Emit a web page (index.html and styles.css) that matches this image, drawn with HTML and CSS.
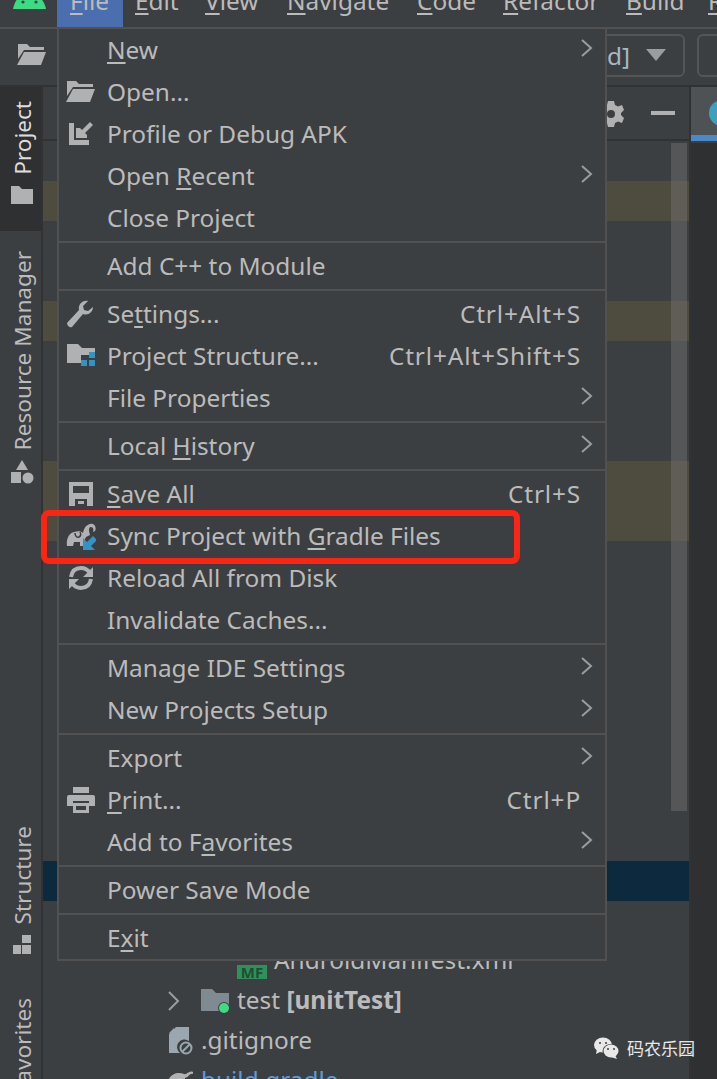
FILE: index.html
```html
<!DOCTYPE html>
<html lang="en">
<head>
<meta charset="utf-8">
<title>Android Studio File menu</title>
<link rel="stylesheet" href="styles.css">
</head>
<body>
<div class="app">
  <header class="menubar">
    <div class="logo"><svg width="34" height="10" viewBox="0 0 34 10"><path class="green" d="M0 9C1 4 3 0 6 -3H26C30 0 32 4 33 9Z"/><circle class="dark" cx="10" cy="2" r="1.6"/><circle class="dark" cx="23" cy="2" r="1.6"/></svg></div>
    <div class="mb-item mb-file"><u>F</u>ile</div>
    <div class="mb-item mb-edit"><u>E</u>dit</div>
    <div class="mb-item mb-view"><u>V</u>iew</div>
    <div class="mb-item mb-nav"><u>N</u>avigate</div>
    <div class="mb-item mb-code"><u>C</u>ode</div>
    <div class="mb-item mb-ref"><u>R</u>efactor</div>
    <div class="mb-item mb-build"><u>B</u>uild</div>
    <div class="mb-item mb-run"><u>R</u>un</div>
  </header>
  <div class="toolbar">
    <svg class="tb-folder" width="30" height="22" viewBox="0 0 30 22"><path class="ic" d="M1 0H10L13 3H27V6H7L1 15ZM7 8H29L24 21H0Z"/></svg>
    <div class="combo"><span class="combo-text">d]</span><svg width="20" height="12" viewBox="0 0 20 12"><path class="ic2" d="M0 0H20L10 12Z"/></svg></div>
    <div class="combo2"></div>
  </div>
  <div class="main">
    <aside class="side">
      <div class="tab tab-on"><span class="vtext">Project</span><svg width="24" height="20" viewBox="0 0 24 20"><path class="ic" d="M1 1H9L12 4H23V19H1Z"/></svg></div>
      <div class="tab tab-res"><span class="vtext">Resource Manager</span><svg width="24" height="24" viewBox="0 0 24 24"><path class="ic" d="M12 0L18 10H6ZM1 12H11V23H1Z"/><circle class="ic" cx="18" cy="18" r="5.5"/></svg></div>
      <div class="tab tab-str"><span class="vtext">Structure</span><svg width="20" height="20" viewBox="0 0 20 20"><path class="ic" d="M1 10H9V19H1ZM10 10H19V19H10ZM10 0H19V8H10Z"/></svg></div>
      <div class="tab tab-fav"><span class="vtext">Favorites</span></div>
    </aside>
    <section class="project">
      <div class="pane-head">
        <svg class="gear" width="26" height="26" viewBox="0 0 26 26"><path class="ic" fill-rule="evenodd" d="M10 0H16L17 4L20 5.500L24 4L26 9L23 12V14L26 17L24 22L20 20.500L17 22L16 26H10L9 22L6 20.500L2 22L0 17L3 14V12L0 9L2 4L6 5.500L9 4ZM13 9A4 4 0 1 0 13 17A4 4 0 1 0 13 9Z"/></svg>
        <div class="minus"></div>
      </div>
      <div class="tree">
        <div class="row"></div>
        <div class="row warn"></div>
        <div class="row"></div>
        <div class="row"></div>
        <div class="row warn"></div>
        <div class="row"></div>
        <div class="row"></div>
        <div class="row"></div>
        <div class="row warn"></div>
        <div class="row warn"></div>
        <div class="row"></div>
        <div class="row"></div>
        <div class="row"></div>
        <div class="row"></div>
        <div class="row"></div>
        <div class="row"></div>
        <div class="row"></div>
        <div class="row"></div>
        <div class="row sel"></div>
        <div class="row"></div>
        <div class="row manifest"><span class="mf">MF</span><span class="rt">AndroidManifest.xml</span></div>
        <div class="row test">
          <svg class="chev" width="12" height="20" viewBox="0 0 12 20"><path d="M1 1L10 10L1 19"/></svg>
          <span class="folder"><svg width="28" height="24" viewBox="0 0 28 24"><path class="blue-gray" d="M0 0H11L15 4H28V22H0Z"/><circle class="dot-ring" cx="23" cy="19" r="6"/><circle class="dot" cx="23" cy="19" r="5"/></svg></span>
          <span class="rt">test <b>[unitTest]</b></span>
        </div>
        <div class="row file">
          <svg width="24" height="28" viewBox="0 0 24 28"><path class="fileic" d="M7 0H20V14A7 7 0 0 0 11 26H0V7ZM5 1V6H0Z"/><circle class="ban" cx="17" cy="21" r="5.500"/><path class="ban" d="M13 25L21 17"/></svg>
          <span class="rt">.gitignore</span>
        </div>
        <div class="row file gradle">
          <svg class="gradle-ic" width="24" height="26" viewBox="0 0 24 26"><path class="ic" d="M0 10C3 4 10 3 15 5C18 6 20 1 24 3V5C21 4 20 8 16 9V24H0Z"/></svg>
          <span class="rt">build.gradle</span>
        </div>
      </div>
      <div class="scrollbar"></div>
    </section>
    <section class="editor">
      <div class="ed-head"><span class="ed-tab"><i class="ed-dot"></i></span></div>
      <div class="ed-body"></div>
    </section>
  </div>

  <nav class="menu">
    <div class="item"><span class="icon"></span><span class="label"><u>N</u>ew</span><svg class="arrow" width="12" height="18" viewBox="0 0 12 18"><path d="M1 1L10 9L1 17"/></svg></div>
    <div class="item"><span class="icon"><svg width="30" height="22" viewBox="0 0 30 22"><path class="ic" d="M1 0H10L13 3H27V6H7L1 15ZM7 8H29L24 21H0Z"/></svg></span><span class="label">Open...</span></div>
    <div class="item"><span class="icon"><svg class="shift" width="26" height="26" viewBox="0 0 26 26"><path class="ic" d="M1 2H6V19H21V24H1Z"/><path class="ic" d="M8 7H12L14 9L22 1L25 4L17 12L19 14V17H8Z"/></svg></span><span class="label">Profile or Debug APK</span></div>
    <div class="item"><span class="icon"></span><span class="label">Open <u>R</u>ecent</span><svg class="arrow" width="12" height="18" viewBox="0 0 12 18"><path d="M1 1L10 9L1 17"/></svg></div>
    <div class="item"><span class="icon"></span><span class="label">Close Project</span></div>
    <div class="sep"></div>
    <div class="item"><span class="icon"></span><span class="label">Add C++ to Module</span></div>
    <div class="sep"></div>
    <div class="item"><span class="icon"><svg width="28" height="28" viewBox="0 0 28 28"><path class="ic" d="M27 7C27 12 22 16 17 14L6 27C4 28 1 26 1 23L13 10C12 5 16 0 22 1L17 6L18 10L22 11Z"/></svg></span><span class="label">Se<u>t</u>tings...</span><span class="short">Ctrl+Alt+S</span></div>
    <div class="item"><span class="icon"><svg width="30" height="26" viewBox="0 0 30 26"><path class="ic" d="M1 1H12L16 5H29V12H15V20H1Z"/><path class="blue" d="M23 9H29V15H23ZM15 17H21V23H15ZM23 17H29V23H23Z"/></svg></span><span class="label">Project Structure...</span><span class="short">Ctrl+Alt+Shift+S</span></div>
    <div class="item"><span class="icon"></span><span class="label">File Properties</span><svg class="arrow" width="12" height="18" viewBox="0 0 12 18"><path d="M1 1L10 9L1 17"/></svg></div>
    <div class="sep"></div>
    <div class="item"><span class="icon"></span><span class="label">Local <u>H</u>istory</span><svg class="arrow" width="12" height="18" viewBox="0 0 12 18"><path d="M1 1L10 9L1 17"/></svg></div>
    <div class="sep"></div>
    <div class="item"><span class="icon"><svg class="shift" width="26" height="26" viewBox="0 0 26 26"><path class="ic" fill-rule="evenodd" d="M1 1H25V25H1ZM5 5V12H21V5ZM7 18V25H19V18ZM10 20H16V23H10Z"/></svg></span><span class="label"><u>S</u>ave All</span><span class="short">Ctrl+S</span></div>
    <div class="item"><span class="icon"><svg width="30" height="28" viewBox="0 0 30 28"><path class="ic" d="M1 24C0 17 3 11 8 10C12 9 15 9 17 11C18 6 20 3 24 2C28 1 31 5 29 9L27 10C28 7 27 5 25 5C23 5 23 7 23 9L24 13L20 15L18 19V24H14V20H8L7 24Z"/><path class="dark-line" d="M9 11C9 14 11 16 13 15C15 14 15 12 14 10"/><path class="blue" d="M17 28V16L21 20L27 14L31 18L25 24L29 28Z"/></svg></span><span class="label">Sync Project with <u>G</u>radle Files</span></div>
    <div class="item"><span class="icon"><svg class="shift" width="26" height="26" viewBox="0 0 26 26"><path class="stroke" d="M3 12C4 6 8 3 13 3C17 3 20 5 22 8"/><path class="stroke" d="M23 14C22 20 18 23 13 23C9 23 6 21 4 18"/><path class="ic" d="M25 2V12H15ZM1 24V14H11Z"/></svg></span><span class="label">Reload All from Disk</span></div>
    <div class="item"><span class="icon"></span><span class="label">Invalidate Caches...</span></div>
    <div class="sep"></div>
    <div class="item"><span class="icon"></span><span class="label">Manage IDE Settings</span><svg class="arrow" width="12" height="18" viewBox="0 0 12 18"><path d="M1 1L10 9L1 17"/></svg></div>
    <div class="item"><span class="icon"></span><span class="label">New Projects Setup</span><svg class="arrow" width="12" height="18" viewBox="0 0 12 18"><path d="M1 1L10 9L1 17"/></svg></div>
    <div class="sep"></div>
    <div class="item"><span class="icon"></span><span class="label">Export</span><svg class="arrow" width="12" height="18" viewBox="0 0 12 18"><path d="M1 1L10 9L1 17"/></svg></div>
    <div class="item"><span class="icon"><svg width="30" height="28" viewBox="0 0 30 28"><path class="ic" fill-rule="evenodd" d="M7 1H23V7H7ZM3 9H27Q29 9 29 11V20H23V15H7V20H1V11Q1 9 3 9ZM7 17H23V27H7ZM10 20V24H20V20Z"/></svg></span><span class="label"><u>P</u>rint...</span><span class="short">Ctrl+P</span></div>
    <div class="item"><span class="icon"></span><span class="label">Add to F<u>a</u>vorites</span><svg class="arrow" width="12" height="18" viewBox="0 0 12 18"><path d="M1 1L10 9L1 17"/></svg></div>
    <div class="sep"></div>
    <div class="item"><span class="icon"></span><span class="label">Power Save Mode</span></div>
    <div class="sep"></div>
    <div class="item"><span class="icon"></span><span class="label">E<u>x</u>it</span></div>
  </nav>
  <div class="mark"></div>
  <div class="watermark">
    <svg width="26" height="22" viewBox="0 0 26 22"><ellipse class="wm" cx="9" cy="8" rx="9" ry="7.500"/><path class="wm" d="M3 12L2 17L8 14Z"/><ellipse class="wm-o" cx="17" cy="14" rx="8.500" ry="7"/><ellipse class="wm" cx="17" cy="14" rx="7.500" ry="6.500"/><path class="wm" d="M21 18L23 22L17 20Z"/><circle class="wm-d" cx="6" cy="6" r="1"/><circle class="wm-d" cx="12" cy="6" r="1"/><circle class="wm-d" cx="14" cy="12" r="1"/><circle class="wm-d" cx="20" cy="12" r="1"/></svg>
    <span>码农乐园</span>
  </div>
</div>
</body>
</html>
```
FILE: styles.css
```css
* { box-sizing: border-box; }
html, body { margin: 0; height: 100%; overflow: hidden; background: #3c3f41; }
body { font-family: "Noto Sans", "Open Sans", sans-serif; color: #bbbbbb; font-size: 24.4px; }
u { text-decoration-thickness: 2px; text-underline-offset: 3px; }
svg { display: block; }
.ic { fill: #afb1b3; }
.ic2 { fill: #9a9c9e; }
.blue { fill: #3592c4; }
.green { fill: #3ddc84; }
.dark { fill: #3c3f41; }
.dark-line { fill: none; stroke: #3c3f41; stroke-width: 1.500; }
.stroke { fill: none; stroke: #afb1b3; stroke-width: 4; }

.app { position: relative; width: 717px; height: 1079px; display: flex; flex-direction: column; overflow: hidden; }

.menubar { flex: none; height: 29px; display: flex; align-items: flex-start; border-bottom: 2px solid #515151; overflow: hidden; }
.logo { flex: none; width: 57px; padding-left: 13px; }
.mb-item { flex: none; line-height: 30px; height: 27px; margin-top: -14px; }
.mb-file { width: 66px; padding-left: 13px; background: #4b6eaf; height: 41px; }
.mb-edit { margin-left: 12px; width: 70px; }
.mb-view { width: 82px; }
.mb-nav { width: 130px; }
.mb-code { width: 86px; }
.mb-ref { width: 123px; }
.mb-build { width: 82px; }

.toolbar { flex: none; height: 58px; display: flex; align-items: center; padding: 0 0 4px 17px; border-bottom: 2px solid #323232; }
.tb-folder { margin-right: auto; }
.combo { width: 300px; height: 43px; border: 2px solid #555; border-radius: 6px; display: flex; align-items: center; justify-content: flex-end; padding-right: 17px; gap: 16px; color: #a9b7c6; }
.combo2 { width: 60px; height: 43px; margin-left: 12px; margin-right: -40px; border: 2px solid #555; border-radius: 6px; }

.main { flex: 1; min-height: 0; display: flex; }
.side { flex: none; width: 43px; border-right: 2px solid #323232; display: flex; flex-direction: column; overflow: hidden; }
.tab { flex: none; display: flex; flex-direction: column; align-items: center; gap: 10px; }
.tab svg { margin-left: 2px; }
.vtext { writing-mode: vertical-rl; transform: rotate(180deg); line-height: 41px; white-space: nowrap; font-size: 22.6px; margin-left: 4px; }
.tab-on { background: #2f3032; color: #ddd; height: 144px; padding-top: 14px; }
.tab-res { margin-top: 20px; }
.tab-str { margin-top: 342px; }
.tab-fav { margin-top: 43px; }

.project { position: relative; flex: none; width: 646px; display: flex; flex-direction: column; }
.pane-head { flex: none; height: 54px; display: flex; align-items: center; justify-content: flex-end; border-bottom: 2px solid #323232; }
.gear { margin-right: 27px; margin-top: 2px; }
.minus { width: 24px; height: 4px; background: #afb1b3; margin-right: 14px; }
.tree { flex: 1; min-height: 0; overflow: hidden; }
.row { height: 40px; display: flex; align-items: center; }
.rt { padding-bottom: 3px; }
.warn { background: #4e4b3f; }
.sel { background: #0d293e; }
.manifest { padding-left: 194px; gap: 7px; }
.mf { width: 30px; height: 14px; background: #30905a; color: #1f4e33; font-size: 15px; font-weight: 700; line-height: 15px; text-align: center; margin-top: 22px; }
.test { padding-left: 125px; }
.chev path { fill: none; stroke: #9a9c9e; stroke-width: 2; }
.folder { margin-left: 21px; margin-right: 8px; }
.blue-gray { fill: #7f8b91; }
.dot-ring { fill: #3c3f41; }
.dot { fill: #3ddc84; }
.test b { font-weight: 700; }
.file { padding-left: 126px; gap: 8px; }
.fileic { fill: #9aa7b0; }
.ban { fill: none; stroke: #9aa7b0; stroke-width: 2; }
.gradle { color: #5c9bd8; align-items: flex-start; padding-top: 2px; }
.gradle-ic { margin-top: 6px; }
.scrollbar { position: absolute; left: 628px; top: 56px; width: 16px; height: 668px; background: rgba(128, 128, 128, .35); }

.editor { flex: 1; min-width: 0; display: flex; flex-direction: column; border-left: 2px solid #323232; }
.ed-head { flex: none; height: 56px; }
.ed-tab { display: block; height: 54px; padding: 13px 0 0 18px; background: #4e5254; border-bottom: 6px solid #4a88c7; overflow: hidden; }
.ed-dot { display: block; width: 26px; height: 26px; border-radius: 50%; background: #40a0bc; }
.ed-body { flex: 1; background: #2f3032; }

.menu { position: absolute; left: 57px; top: 27px; width: 550px; height: 934px; border: 2px solid #515151; background: #3c3f41; }
.item { height: 42px; display: flex; align-items: center; padding-right: 12px; white-space: nowrap; }
.icon { flex: none; width: 48px; height: 30px; padding-left: 7px; display: flex; align-items: center; }
.shift { margin-left: 2px; }
.label { flex: none; padding-bottom: 2px; }
.short { margin-left: auto; margin-right: 12px; padding-bottom: 2px; letter-spacing: .85px; }
.arrow { margin-left: auto; margin-top: -4px; }
.arrow path { fill: none; stroke: #9a9c9e; stroke-width: 2; }
.sep { height: 6px; padding: 2px 0; }
.sep::before { content: ""; display: block; height: 2px; background: #515151; }

.mark { position: absolute; left: 41px; top: 510px; width: 479px; height: 54px; border: 6px solid #fc2514; border-radius: 8px; }
.watermark { position: absolute; left: 594px; top: 1035px; display: flex; align-items: center; gap: 7px; font-family: "Noto Sans CJK SC", sans-serif; font-size: 17px; color: #e8e8e8; }
.wm { fill: #e8e8e8; }
.wm-o { fill: #3c3f41; }
.wm-d { fill: #3c3f41; }
```
